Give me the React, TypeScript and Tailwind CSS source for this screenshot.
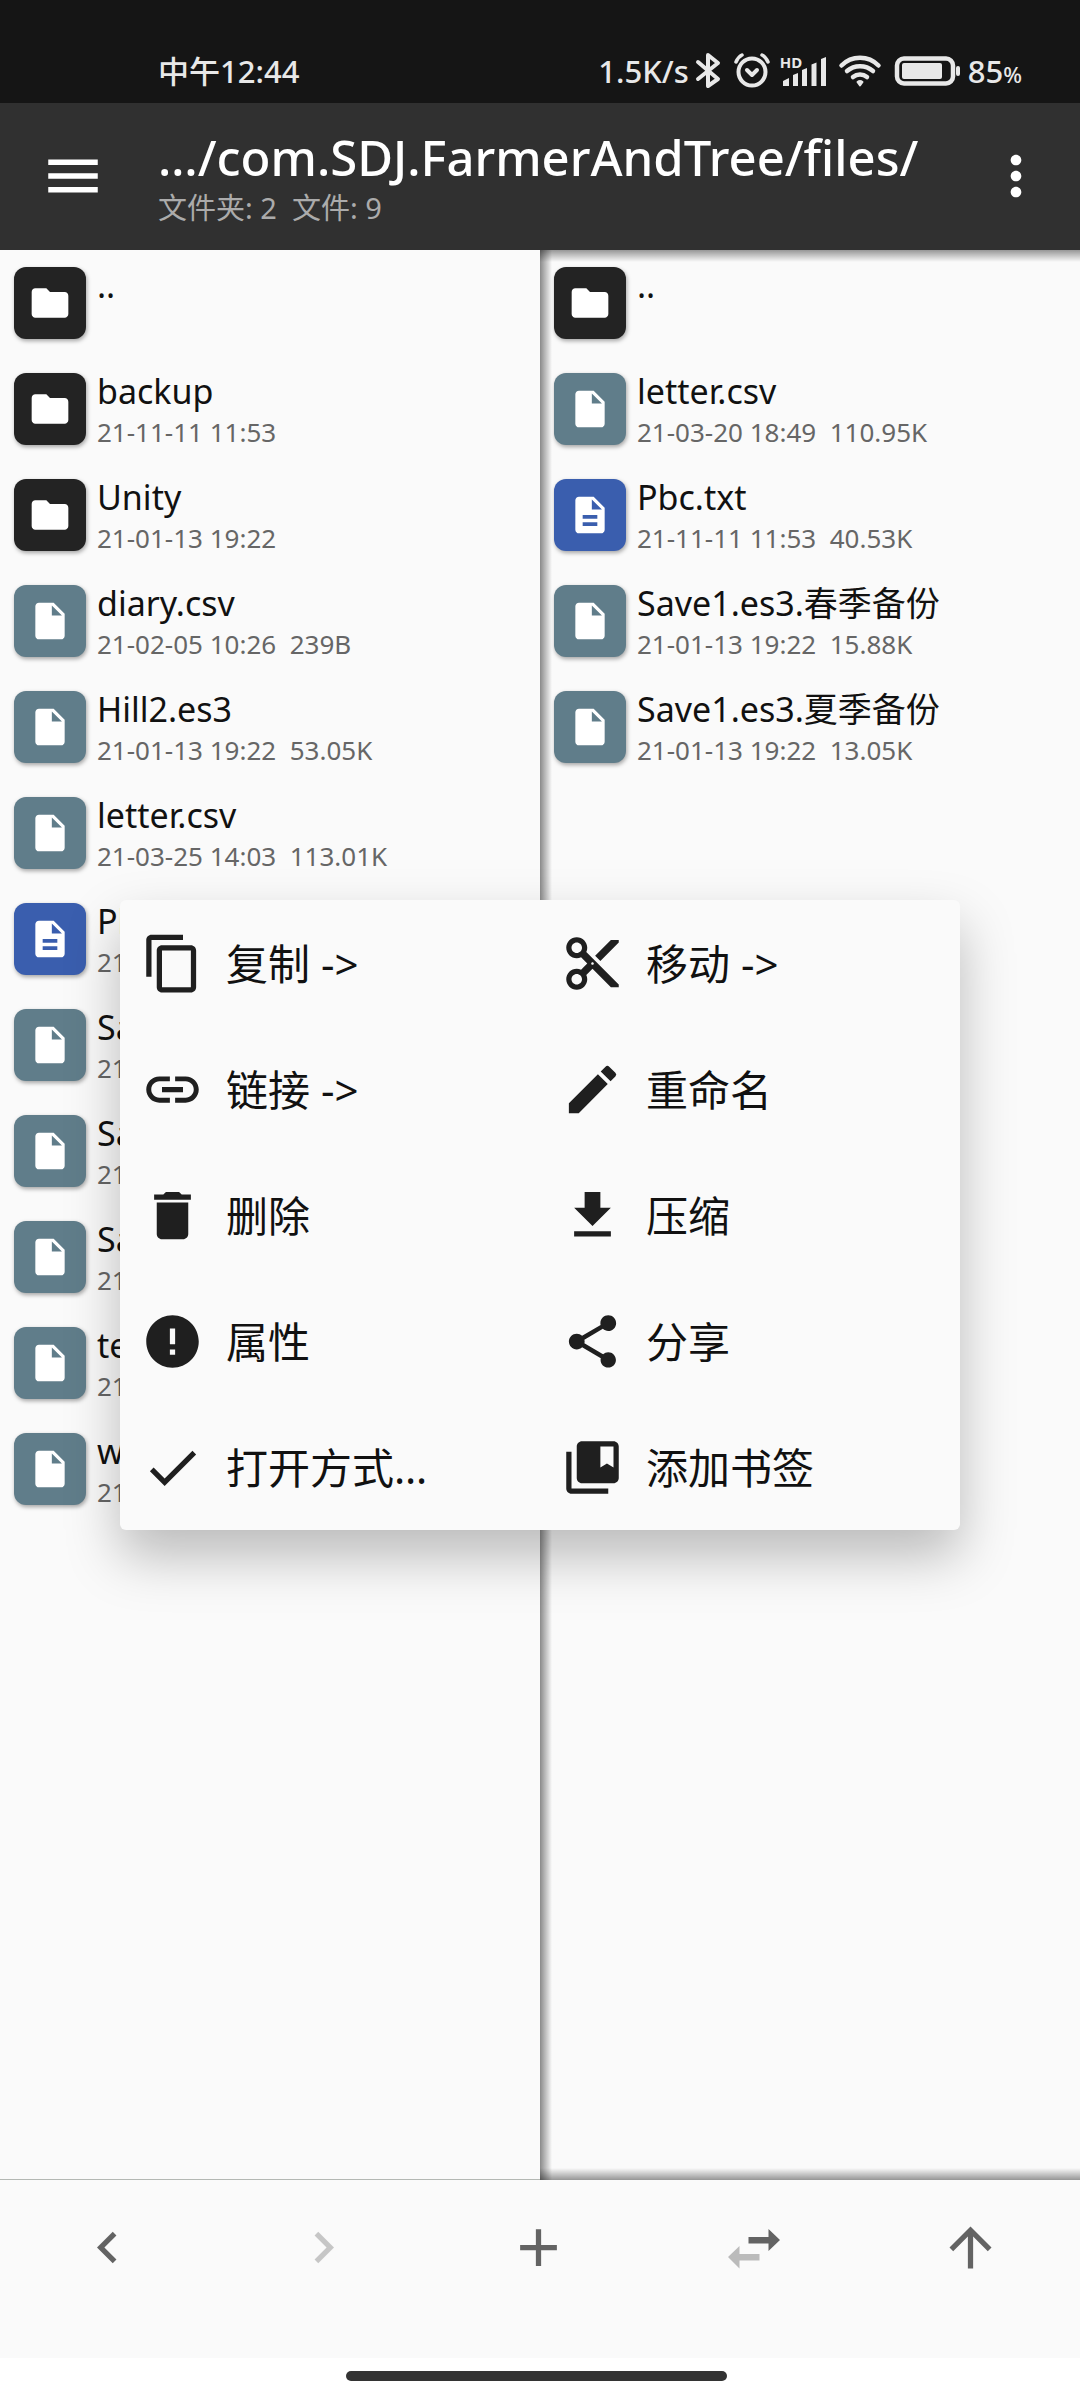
import React, { useState } from 'react';
import {
  MdAdd,
  MdArrowUpward,
  MdChevronLeft,
  MdChevronRight,
  MdCollectionsBookmark,
  MdContentCopy,
  MdContentCut,
  MdDelete,
  MdDescription,
  MdDone,
  MdEdit,
  MdError,
  MdFileDownload,
  MdFolder,
  MdInsertDriveFile,
  MdLink,
  MdMenu,
  MdMoreVert,
  MdShare,
} from 'react-icons/md';

type FileItem = {
  kind: 'folder' | 'file' | 'text';
  name: string;
  info?: string;
};

const leftFiles: FileItem[] = [
  { kind: 'folder', name: '..' },
  { kind: 'folder', name: 'backup', info: '21-11-11 11:53' },
  { kind: 'folder', name: 'Unity', info: '21-01-13 19:22' },
  { kind: 'file', name: 'diary.csv', info: '21-02-05 10:26  239B' },
  { kind: 'file', name: 'Hill2.es3', info: '21-01-13 19:22  53.05K' },
  { kind: 'file', name: 'letter.csv', info: '21-03-25 14:03  113.01K' },
  { kind: 'text', name: 'Pbc.txt', info: '21-11-11 11:53  40.53K' },
  { kind: 'file', name: 'Save1.es3', info: '21-01-13 19:22  15.88K' },
  { kind: 'file', name: 'Save2.es3', info: '21-01-13 19:22  13.05K' },
  { kind: 'file', name: 'Save3.es3', info: '21-01-13 19:22  13.05K' },
  { kind: 'file', name: 'text.csv', info: '21-01-13 19:22  2.10K' },
  { kind: 'file', name: 'world.csv', info: '21-01-13 19:22  1.04K' },
];

const rightFiles: FileItem[] = [
  { kind: 'folder', name: '..' },
  { kind: 'file', name: 'letter.csv', info: '21-03-20 18:49  110.95K' },
  { kind: 'text', name: 'Pbc.txt', info: '21-11-11 11:53  40.53K' },
  { kind: 'file', name: 'Save1.es3.春季备份', info: '21-01-13 19:22  15.88K' },
  { kind: 'file', name: 'Save1.es3.夏季备份', info: '21-01-13 19:22  13.05K' },
];

const menuItems = [
  { icon: MdContentCopy, label: '复制 ->' },
  { icon: MdContentCut, label: '移动 ->' },
  { icon: MdLink, label: '链接 ->' },
  { icon: MdEdit, label: '重命名' },
  { icon: MdDelete, label: '删除' },
  { icon: MdFileDownload, label: '压缩' },
  { icon: MdError, label: '属性' },
  { icon: MdShare, label: '分享' },
  { icon: MdDone, label: '打开方式…' },
  { icon: MdCollectionsBookmark, label: '添加书签' },
];

const tiles = {
  folder: { icon: MdFolder, color: 'bg-[#232323]' },
  file: { icon: MdInsertDriveFile, color: 'bg-[#607d8a]' },
  text: { icon: MdDescription, color: 'bg-[#3a5eae]' },
};

const StatusBar = () => (
  <div className="flex h-[103px] items-end justify-between bg-[#151515] pr-[58px] pb-[12px] pl-[158px] text-[31px] leading-[40px] font-medium text-[#e8e8e8]">
    <span>中午12:44</span>
    <div className="flex h-[40px] items-center">
      <span>1.5K/s</span>
      {/* bluetooth */}
      <svg className="ml-[6px] h-[40px] w-[26px]" viewBox="0 0 26 40" fill="none" stroke="currentColor" strokeWidth="4" strokeLinejoin="round" strokeLinecap="round">
        <path d="M3 11 L23 28 L13 35 V4 L23 12 L3 28" />
      </svg>
      {/* alarm */}
      <svg className="ml-[12px] h-[40px] w-[38px]" viewBox="0 0 38 40" fill="none" stroke="currentColor" strokeWidth="4" strokeLinecap="round">
        <circle cx="19" cy="21" r="13.5" />
        <path d="M14 19 L19 24 L24 19" strokeLinejoin="round" />
        <path d="M3 11 Q5 6 9 4 M35 11 Q33 6 29 4" strokeWidth="3.5" />
      </svg>
      {/* signal */}
      <div className="relative ml-[9px] h-[40px] w-[48px]">
        <span className="absolute top-[3px] left-0 text-[15px] leading-[16px] font-bold">HD</span>
        <svg className="h-[40px] w-[48px]" viewBox="0 0 48 40" fill="currentColor">
          <path d="M3 35 V30 L9 27 V35 Z" />
          <path d="M13 35 V24 L18 22 V35 Z" />
          <path d="M22 35 V19 L27 17 V35 Z" />
          <path d="M31.500 35 V13.500 L36.500 11.500 V35 Z" />
          <path d="M41 35 V8 L46 6 V35 Z" />
        </svg>
      </div>
      {/* wifi */}
      <svg className="ml-[10px] h-[40px] w-[44px]" viewBox="0 0 44 40" fill="none" stroke="currentColor" strokeWidth="4.500" strokeLinecap="round">
        <path d="M3.500 14.500 A26 26 0 0 1 40.500 14.500" />
        <path d="M9 20 A20 20 0 0 1 35 20" />
        <path d="M15 26 A11 11 0 0 1 29 26" />
        <path d="M22 34.500 L19.500 31 A4 4 0 0 1 24.500 31 Z" fill="currentColor" strokeWidth="2" strokeLinejoin="round" />
      </svg>
      {/* battery */}
      <svg className="ml-[12px] h-[40px] w-[68px]" viewBox="0 0 68 40" fill="none">
        <rect x="3" y="7.500" width="56" height="25" rx="7" stroke="currentColor" strokeWidth="4.500" />
        <rect x="8" y="12" width="40" height="16" rx="2" fill="currentColor" />
        <rect x="62" y="15" width="4" height="10" rx="2" fill="currentColor" />
      </svg>
      <span className="ml-[6px]">
        85<span className="text-[22px] leading-none">%</span>
      </span>
    </div>
  </div>
);

const Header = () => (
  <header className="flex h-[147px] items-center bg-[#303030] pr-[32px] pb-[2px] pl-[40px] text-white">
    <button type="button" aria-label="菜单">
      <MdMenu className="size-[66px]" />
    </button>
    <div className="ml-[52px] min-w-0 flex-1 pt-[2px]">
      <h1 className="text-[49px] leading-[62px] font-medium whitespace-nowrap">…/com.SDJ.FarmerAndTree/files/</h1>
      <p className="text-[29px] leading-[40px] whitespace-pre text-[#ababab]">文件夹: 2  文件: 9</p>
    </div>
    <button type="button" aria-label="更多">
      <MdMoreVert className="size-[64px]" />
    </button>
  </header>
);

const FileRow = ({ item }: { item: FileItem }) => {
  const { icon: Icon, color } = tiles[item.kind];
  return (
    <li>
      <button type="button" className="flex h-[106px] w-full items-center gap-[11px] pl-[14px] text-left">
        <span className={`flex size-[72px] shrink-0 items-center justify-center rounded-xl text-white shadow-[1px_2px_4px_rgba(0,0,0,0.35)] ${color}`}>
          <Icon className="size-[44px]" />
        </span>
        <span className="flex h-[80px] min-w-0 flex-col">
          <span className="text-[34px] leading-[44px] whitespace-nowrap text-[#111]">{item.name}</span>
          {item.info && <span className="text-[26px] leading-[38px] whitespace-pre text-[#666]">{item.info}</span>}
        </span>
      </button>
    </li>
  );
};

const FileList = ({ files }: { files: FileItem[] }) => (
  <ul>
    {files.map((item, index) => (
      <FileRow key={index} item={item} />
    ))}
  </ul>
);

const ContextMenu = () => (
  <div className="pointer-events-none absolute inset-0 flex items-center px-[120px]">
    <div role="menu" className="pointer-events-auto grid w-full grid-cols-2 rounded-md bg-[#fafafa] shadow-[0_26px_54px_rgba(0,0,0,0.26)]">
      {menuItems.map(({ icon: Icon, label }) => (
        <button key={label} type="button" role="menuitem" className="flex h-[126px] items-center gap-[22px] pl-[21px] text-[#111]">
          <Icon className="size-[63px] text-[#1f1f1f]" />
          <span className="pt-[2px] text-[42px] leading-[56px]">{label}</span>
        </button>
      ))}
    </div>
  </div>
);

const SwapIcon = () => (
  <svg className="size-[63px]" viewBox="0 0 63 63" fill="currentColor">
    <path d="M25.500 21 H45.500 V13 L57 24 L45.500 35 V27.500 H25.500 Z" />
    <path className="text-[#bbb]" d="M36.500 38 H16.500 V30 L5 41 L16.500 52.500 V44.500 H36.500 Z" />
  </svg>
);

const BottomBar = () => (
  <nav className="grid h-[178px] grid-cols-5 bg-[#fafafa] pr-[2px] pb-[44px] text-[#636363]">
    <button type="button" aria-label="后退" className="flex items-center justify-center">
      <MdChevronLeft className="size-[63px]" />
    </button>
    <button type="button" aria-label="前进" disabled className="flex items-center justify-center text-[#c6c6c6]">
      <MdChevronRight className="size-[63px]" />
    </button>
    <button type="button" aria-label="新建" className="flex items-center justify-center">
      <MdAdd className="size-[63px]" />
    </button>
    <button type="button" aria-label="切换" className="flex items-center justify-center">
      <SwapIcon />
    </button>
    <button type="button" aria-label="向上" className="flex items-center justify-center">
      <MdArrowUpward className="size-[63px]" />
    </button>
  </nav>
);

const App = () => {
  const [menuOpen] = useState(true);

  return (
    <div className="flex min-h-screen flex-col bg-white font-['Noto_Sans','Noto_Sans_CJK_SC',sans-serif]">
      <StatusBar />
      <Header />
      <main className="relative grid flex-1 grid-cols-2 bg-[#fafafa]">
        <section className="border-b border-[#b4b8b4]">
          <FileList files={leftFiles} />
        </section>
        <section className="relative">
          <FileList files={rightFiles} />
          {/* inner shadow of the inactive panel */}
          <div className="pointer-events-none absolute inset-y-0 left-0 w-[12px] bg-linear-to-r from-black/45 to-transparent" />
          <div className="pointer-events-none absolute inset-x-0 top-0 h-[12px] bg-linear-to-b from-black/40 to-transparent" />
          <div className="pointer-events-none absolute inset-x-0 bottom-0 h-[12px] bg-linear-to-t from-black/40 to-transparent" />
        </section>
        {menuOpen && <ContextMenu />}
      </main>
      <BottomBar />
      <div className="flex h-[42px] justify-center bg-white pt-[13px] pr-[7px]">
        <div className="h-[10px] w-[381px] rounded-full bg-[#333]" />
      </div>
    </div>
  );
};

export default App;
